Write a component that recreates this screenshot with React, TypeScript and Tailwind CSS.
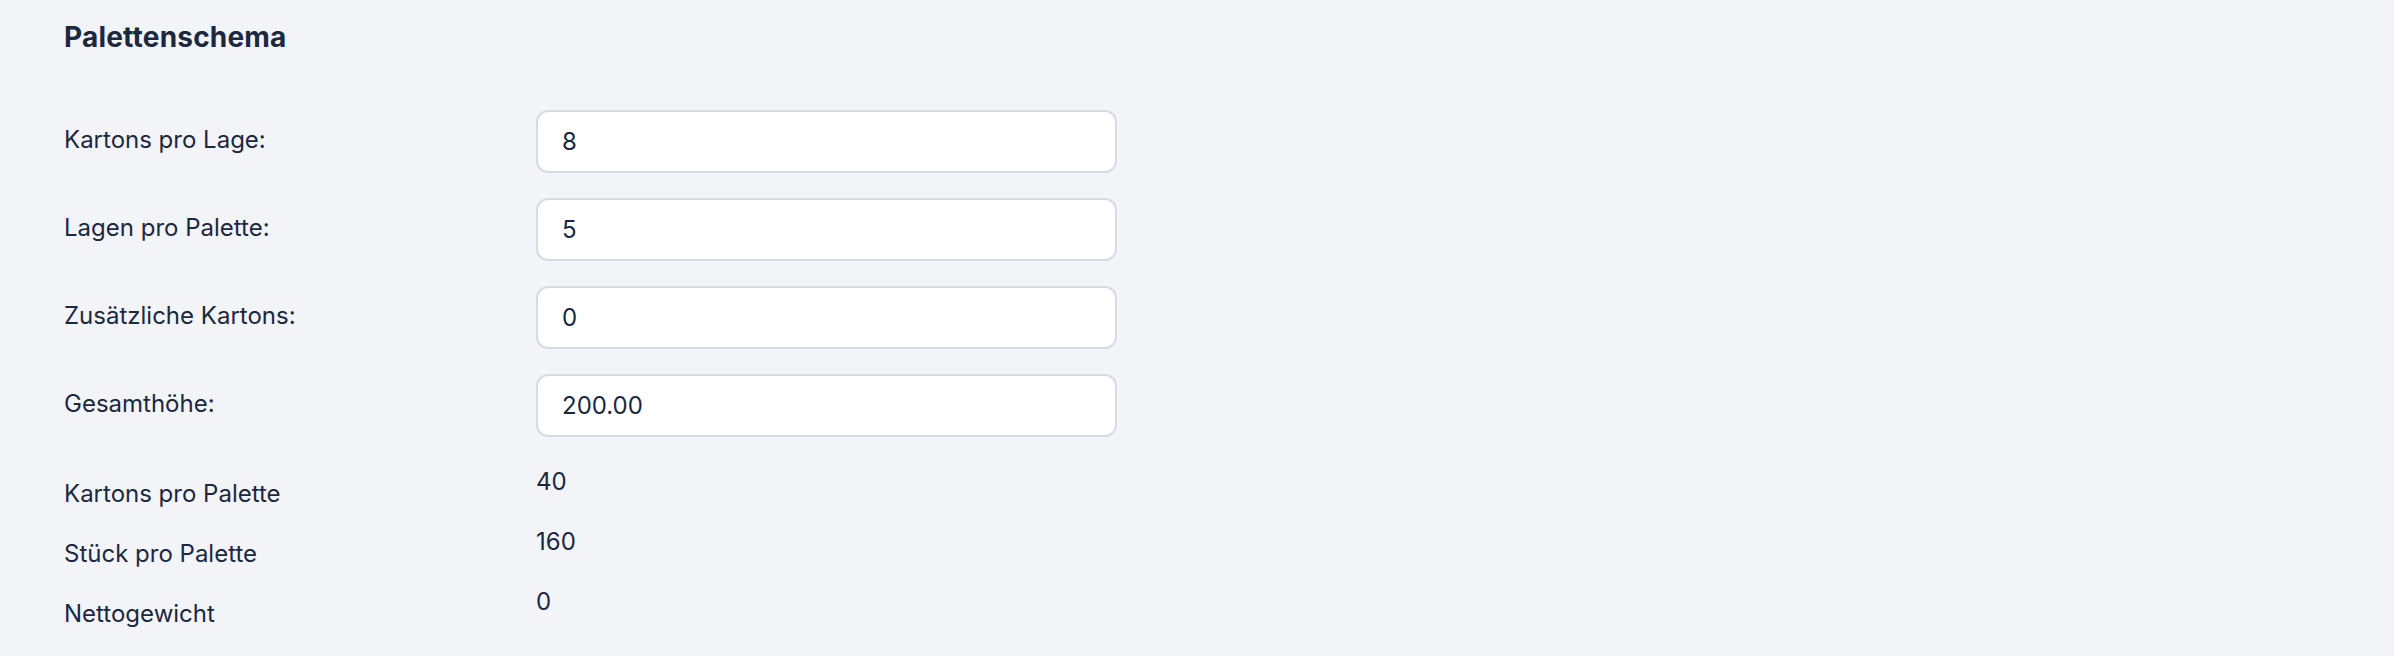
// Palettenschema form: editable pallet config rows plus computed read-only rows
const inputs = [
  { label: 'Kartons pro Lage:', value: '8' },
  { label: 'Lagen pro Palette:', value: '5' },
  { label: 'Zusätzliche Kartons:', value: '0' },
  { label: 'Gesamthöhe:', value: '200.00' },
];

const computed = [
  { label: 'Kartons pro Palette', value: '40' },
  { label: 'Stück pro Palette', value: '160' },
  { label: 'Nettogewicht', value: '0' },
];

export default function App() {
  return (
    <div
      className="min-h-screen w-full bg-[#f3f4f7] pl-16 pt-[16px] text-[#1b2840]"
      style={{ fontFamily: 'Inter, "Noto Sans", sans-serif' }}
    >
      <h2 className="text-[28px] font-bold leading-[42px] tracking-[0.2px]">Palettenschema</h2>

      {/* editable fields */}
      <div className="mt-[52px] flex flex-col gap-[25px]">
        {inputs.map((f) => (
          <div key={f.label} className="grid grid-cols-[472px_581px]">
            <label className="pt-[12px] text-[24px] leading-[36px]">{f.label}</label>
            <input
              defaultValue={f.value}
              className="h-[63px] w-full rounded-[12px] border-2 border-[#d6dae2] bg-white px-[24px] text-[24px] leading-[36px] text-[#1b2840] outline-none"
            />
          </div>
        ))}
      </div>

      {/* computed values */}
      <div className="mt-[27px] flex flex-col gap-[12px]">
        {computed.map((r) => (
          <div key={r.label} className="grid grid-cols-[472px_581px]">
            <div className="pt-[12px] text-[24px] leading-[36px]">{r.label}</div>
            <div className="text-[24px] leading-[36px]">{r.value}</div>
          </div>
        ))}
      </div>
    </div>
  );
}
